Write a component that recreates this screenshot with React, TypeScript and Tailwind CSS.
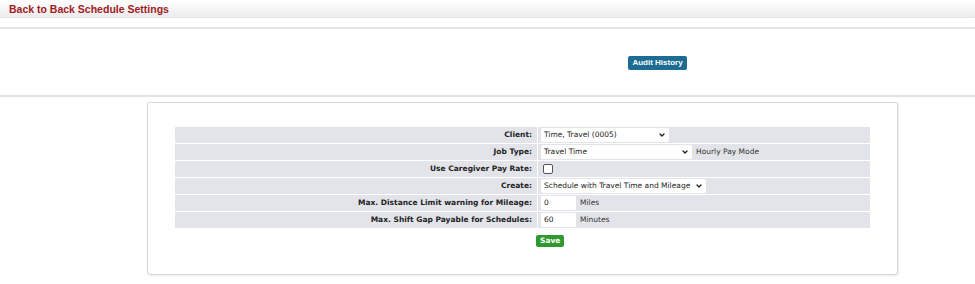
import { ChevronDown } from "lucide-react";

type Row = {
  label: string;
  field: React.ReactNode;
};

function Select({ value, width }: { value: string; width: string }) {
  return (
    <div
      className={`flex h-[14px] items-center justify-between rounded-[2px] bg-white pl-[3px] pr-[3px] text-[7.5px] text-[#222] ${width}`}
    >
      <span className="whitespace-nowrap">{value}</span>
      <ChevronDown className="h-[8px] w-[8px] shrink-0" strokeWidth={4} />
    </div>
  );
}

function TextBox({ value }: { value: string }) {
  return (
    <div className="flex h-[14px] w-[35px] items-center rounded-[1px] bg-white pl-[3px] text-[7.5px] text-[#222]">
      {value}
    </div>
  );
}

const rows: Row[] = [
  { label: "Client:", field: <Select value="Time, Travel (0005)" width="w-[128px]" /> },
  {
    label: "Job Type:",
    field: (
      <div className="flex items-center gap-[4px]">
        <Select value="Travel Time" width="w-[151px]" />
        <span className="text-[#333]">Hourly Pay Mode</span>
      </div>
    ),
  },
  {
    label: "Use Caregiver Pay Rate:",
    field: <div className="ml-[2px] h-[10px] w-[10px] rounded-[2px] border border-[#555] bg-white" />,
  },
  {
    label: "Create:",
    field: <Select value="Schedule with Travel Time and Mileage" width="w-[165px]" />,
  },
  {
    label: "Max. Distance Limit warning for Mileage:",
    field: (
      <div className="flex items-center gap-[4px]">
        <TextBox value="0" />
        <span className="text-[#333]">Miles</span>
      </div>
    ),
  },
  {
    label: "Max. Shift Gap Payable for Schedules:",
    field: (
      <div className="flex items-center gap-[4px]">
        <TextBox value="60" />
        <span className="text-[#333]">Minutes</span>
      </div>
    ),
  },
];

export default function App() {
  return (
    <div className="h-[284px] w-[975px] overflow-hidden bg-white font-['Liberation_Sans',Arial,sans-serif]">
      {/* title bar */}
      <div className="h-[18px] border-b border-[#e6e6e6] bg-gradient-to-b from-white to-[#ececec] pl-[9px]">
        <h1 className="pt-[1px] text-[10.5px] font-bold leading-[16px] text-[#a11b1f]">
          Back to Back Schedule Settings
        </h1>
      </div>
      <div className="mt-[9px] h-[2px] bg-[#e3e3e3]" />

      <div className="flex h-[66px] items-start justify-end pr-[288px] pt-[27px]">
        <button className="h-[14px] w-[59px] rounded-[2px] bg-[#1c6c93] text-[8px] font-bold leading-[14px] text-white">
          Audit History
        </button>
      </div>
      <div className="h-[2px] bg-[#e3e3e3]" />

      <div className="ml-[147px] mt-[5px] h-[173px] w-[751px] rounded-[3px] border border-[#d6d6d6] bg-white px-[27px] pt-[24px] shadow-[1px_1px_2px_rgba(0,0,0,0.08)]">
        <div className="flex flex-col gap-[1px] font-['DejaVu_Sans',Verdana,sans-serif] text-[7.5px]">
          {rows.map((row) => (
            <div key={row.label} className="grid h-[16px] grid-cols-[362px_1fr] gap-[1px]">
              <div className="flex items-center justify-end bg-[#e3e4e9] pr-[5px] font-bold text-[#222]">
                {row.label}
              </div>
              <div className="flex items-center bg-[#e3e4e9] pl-[3px]">{row.field}</div>
            </div>
          ))}
        </div>
        <div className="mt-[7px] flex pl-[361px]">
          <button className="h-[12px] rounded-[2px] bg-[#2e9a2e] px-[4px] font-['DejaVu_Sans',Verdana,sans-serif] text-[7.5px] font-bold leading-[12px] text-white">
            Save
          </button>
        </div>
      </div>
    </div>
  );
}
